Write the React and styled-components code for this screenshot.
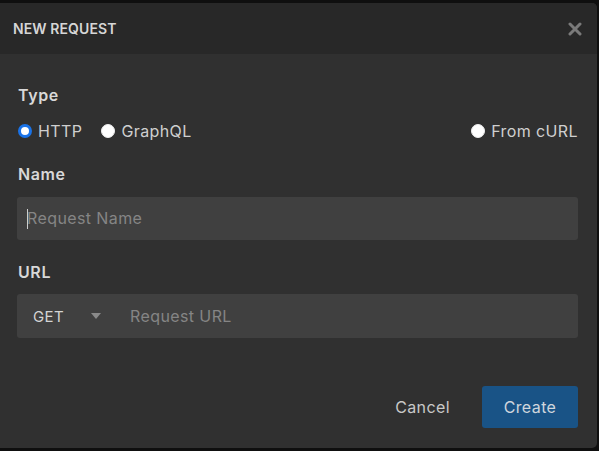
import styled, { createGlobalStyle } from "styled-components";

const Global = createGlobalStyle`
  html, body {
    margin: 0;
    padding: 0;
    background: #0f0f0f;
    font-family: Inter, "Noto Sans", sans-serif;
  }
  * { box-sizing: border-box; }
`;

const Page = styled.div`
  width: 599px;
  height: 451px;
  padding: 3px 2px 3px 0;
`;

const Modal = styled.div`
  height: 445px;
  background: #303030;
  border-radius: 0 5px 5px 0;
  overflow: hidden;
  display: flex;
  flex-direction: column;
`;

const Header = styled.div`
  height: 51px;
  background: #282828;
  display: flex;
  align-items: center;
  justify-content: space-between;
  padding: 0 15px 0 13px;
`;

const Title = styled.div`
  color: #d6d6d6;
  font-size: 14px;
  font-weight: 600;
  letter-spacing: 0.1px;
`;

const Close = styled.button`
  background: none;
  border: 0;
  padding: 0;
  width: 14px;
  height: 14px;
  display: flex;
  cursor: pointer;
`;

const Body = styled.div`
  flex: 1;
  padding: 32px 19px 0 17px;
  display: flex;
  flex-direction: column;
`;

const Label = styled.div`
  color: #d8d8d8;
  font-size: 16px;
  font-weight: 600;
  letter-spacing: 0.6px;
  margin: ${(p) => p.$top || 0}px 0 0 1px;
  line-height: 18px;
`;

const RadioRow = styled.div`
  display: flex;
  align-items: center;
  margin-top: 18px;
  height: 18px;
  padding-left: 1px;
`;

const RadioItem = styled.label`
  display: flex;
  align-items: center;
  gap: 6px;
  color: #cfcfcf;
  font-size: 16px;
  letter-spacing: 0.4px;
  margin-right: ${(p) => (p.$last ? 0 : "19px")};
  margin-left: ${(p) => (p.$push ? "auto" : 0)};
`;

const Dot = styled.span`
  width: 14px;
  height: 14px;
  border-radius: 50%;
  background: #fff;
  border: ${(p) => (p.$on ? "3px solid #1a73e8" : "1px solid #eee")};
  box-shadow: ${(p) => (p.$on ? "inset 0 0 0 1.5px #fff" : "none")};
`;

const Field = styled.div`
  height: ${(p) => p.$h}px;
  margin-top: ${(p) => p.$top}px;
  background: #404040;
  border-radius: 3px;
  display: flex;
  align-items: center;
  font-size: 16px;
  letter-spacing: 0.4px;
`;

const Placeholder = styled.span`
  color: #858585;
`;

const Caret = styled.span`
  display: inline-block;
  width: 1px;
  height: 20px;
  background: #cfcfcf;
  vertical-align: middle;
  margin-right: -1px;
`;

const Method = styled.div`
  display: flex;
  align-items: center;
  color: #d4d4d4;
  padding-left: 16px;
  width: 113px;
  gap: 27px;
  font-size: 15px;
  letter-spacing: 0.4px;
`;

const Footer = styled.div`
  display: flex;
  justify-content: flex-end;
  align-items: center;
  padding: 0 19px 20px 0;
  gap: 32px;
`;

const TextButton = styled.button`
  background: none;
  border: 0;
  color: #c8c8c8;
  font-family: inherit;
  font-size: 16px;
  letter-spacing: 0.4px;
  padding: 0;
`;

const Primary = styled.button`
  background: #195386;
  border: 0;
  border-radius: 3px;
  color: #cfd6dd;
  font-family: inherit;
  font-size: 16px;
  letter-spacing: 0.4px;
  width: 96px;
  height: 42px;
`;

export default function App() {
  return (
    <>
      <Global />
      <Page>
        <Modal>
          <Header>
            <Title>NEW REQUEST</Title>
            <Close aria-label="close">
              <svg width="14" height="14" viewBox="0 0 14 14">
                <path d="M2 2 L12 12 M12 2 L2 12" stroke="#7a7a7a" strokeWidth="3" strokeLinecap="round" />
              </svg>
            </Close>
          </Header>
          <Body>
            <Label>Type</Label>
            <RadioRow>
              <RadioItem>
                <Dot $on />
                HTTP
              </RadioItem>
              <RadioItem>
                <Dot />
                GraphQL
              </RadioItem>
              <RadioItem $push $last>
                <Dot />
                From cURL
              </RadioItem>
            </RadioRow>
            <Label $top={25}>Name</Label>
            <Field $h={43} $top={14}>
              <Placeholder style={{ paddingLeft: 10 }}>
                <Caret />
                Request Name
              </Placeholder>
            </Field>
            <Label $top={23}>URL</Label>
            <Field $h={44} $top={13}>
              <Method>
                GET
                <svg width="10" height="6" viewBox="0 0 10 6">
                  <path d="M0 0 L10 0 L5 6 Z" fill="#8a8a8a" />
                </svg>
              </Method>
              <Placeholder>Request URL</Placeholder>
            </Field>
          </Body>
          <Footer>
            <TextButton>Cancel</TextButton>
            <Primary>Create</Primary>
          </Footer>
        </Modal>
      </Page>
    </>
  );
}
